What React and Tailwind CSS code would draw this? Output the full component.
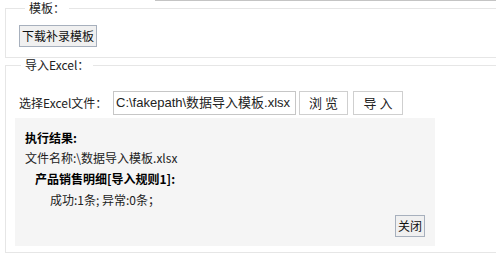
export default function App() {
  const cjk = "font-['Noto_Sans_CJK_SC',sans-serif]";
  return (
    <div className={`w-[496px] h-[276px] overflow-hidden bg-white text-[12px] text-[#222] ${cjk}`}>
      <div className="ml-[155px] h-px bg-[#c4c4c4]" />

      <fieldset className="ml-[5px] w-[560px] border border-[#e6e6e6] pl-[13px] pt-[10px] pb-[10px]">
        <legend className="ml-[6px] px-[4px] leading-[14px]">模板：</legend>
        <button className="h-[22px] px-[2px] border border-[#a7b0bd] bg-[#f0f0f0] text-[12px] leading-[20px] text-[#111]">
          下载补录模板
        </button>
      </fieldset>

      <fieldset className="ml-[5px] w-[560px] border border-[#e6e6e6] pl-[9px] pt-[19px] pb-[6px]">
        <legend className="ml-[6px] px-[4px] leading-[14px]">导入Excel：</legend>
        <div className="flex items-center pl-[4px] h-[24px]">
          <span className="w-[94px]">选择Excel文件：</span>
          <div className="w-[183px] h-[24px] border border-[#c6c6c6] flex items-center px-[2px] text-[13px] font-['Liberation_Sans','Noto_Sans_CJK_SC',sans-serif] whitespace-nowrap overflow-hidden">
            C:\fakepath\数据导入模板.xlsx
          </div>
          <button className="ml-[3px] w-[49px] h-[24px] border border-[#cfcfcf] bg-white text-[13px]">
            浏 览
          </button>
          <button className="ml-[5px] w-[50px] h-[24px] border border-[#cfcfcf] bg-white text-[13px]">
            导 入
          </button>
        </div>

        <div className="mt-[3px] w-[420px] h-[128px] bg-[#f5f5f5] pl-[10px] pr-[10px] pt-[10px] flex flex-col leading-[20px]">
          <div className="font-bold text-black">执行结果:</div>
          <div>文件名称:\数据导入模板.xlsx</div>
          <div className="pl-[10px] font-bold text-black leading-[22px]">产品销售明细[导入规则1]:</div>
          <div className="pl-[25px]">成功:1条; 异常:0条；</div>
          <div className="mt-[5px] flex justify-end">
            <button className="h-[22px] w-[30px] border border-[#a7b0bd] bg-[#f0f0f0] text-[12px] leading-[20px] text-[#111]">
              关闭
            </button>
          </div>
        </div>
      </fieldset>
    </div>
  );
}
